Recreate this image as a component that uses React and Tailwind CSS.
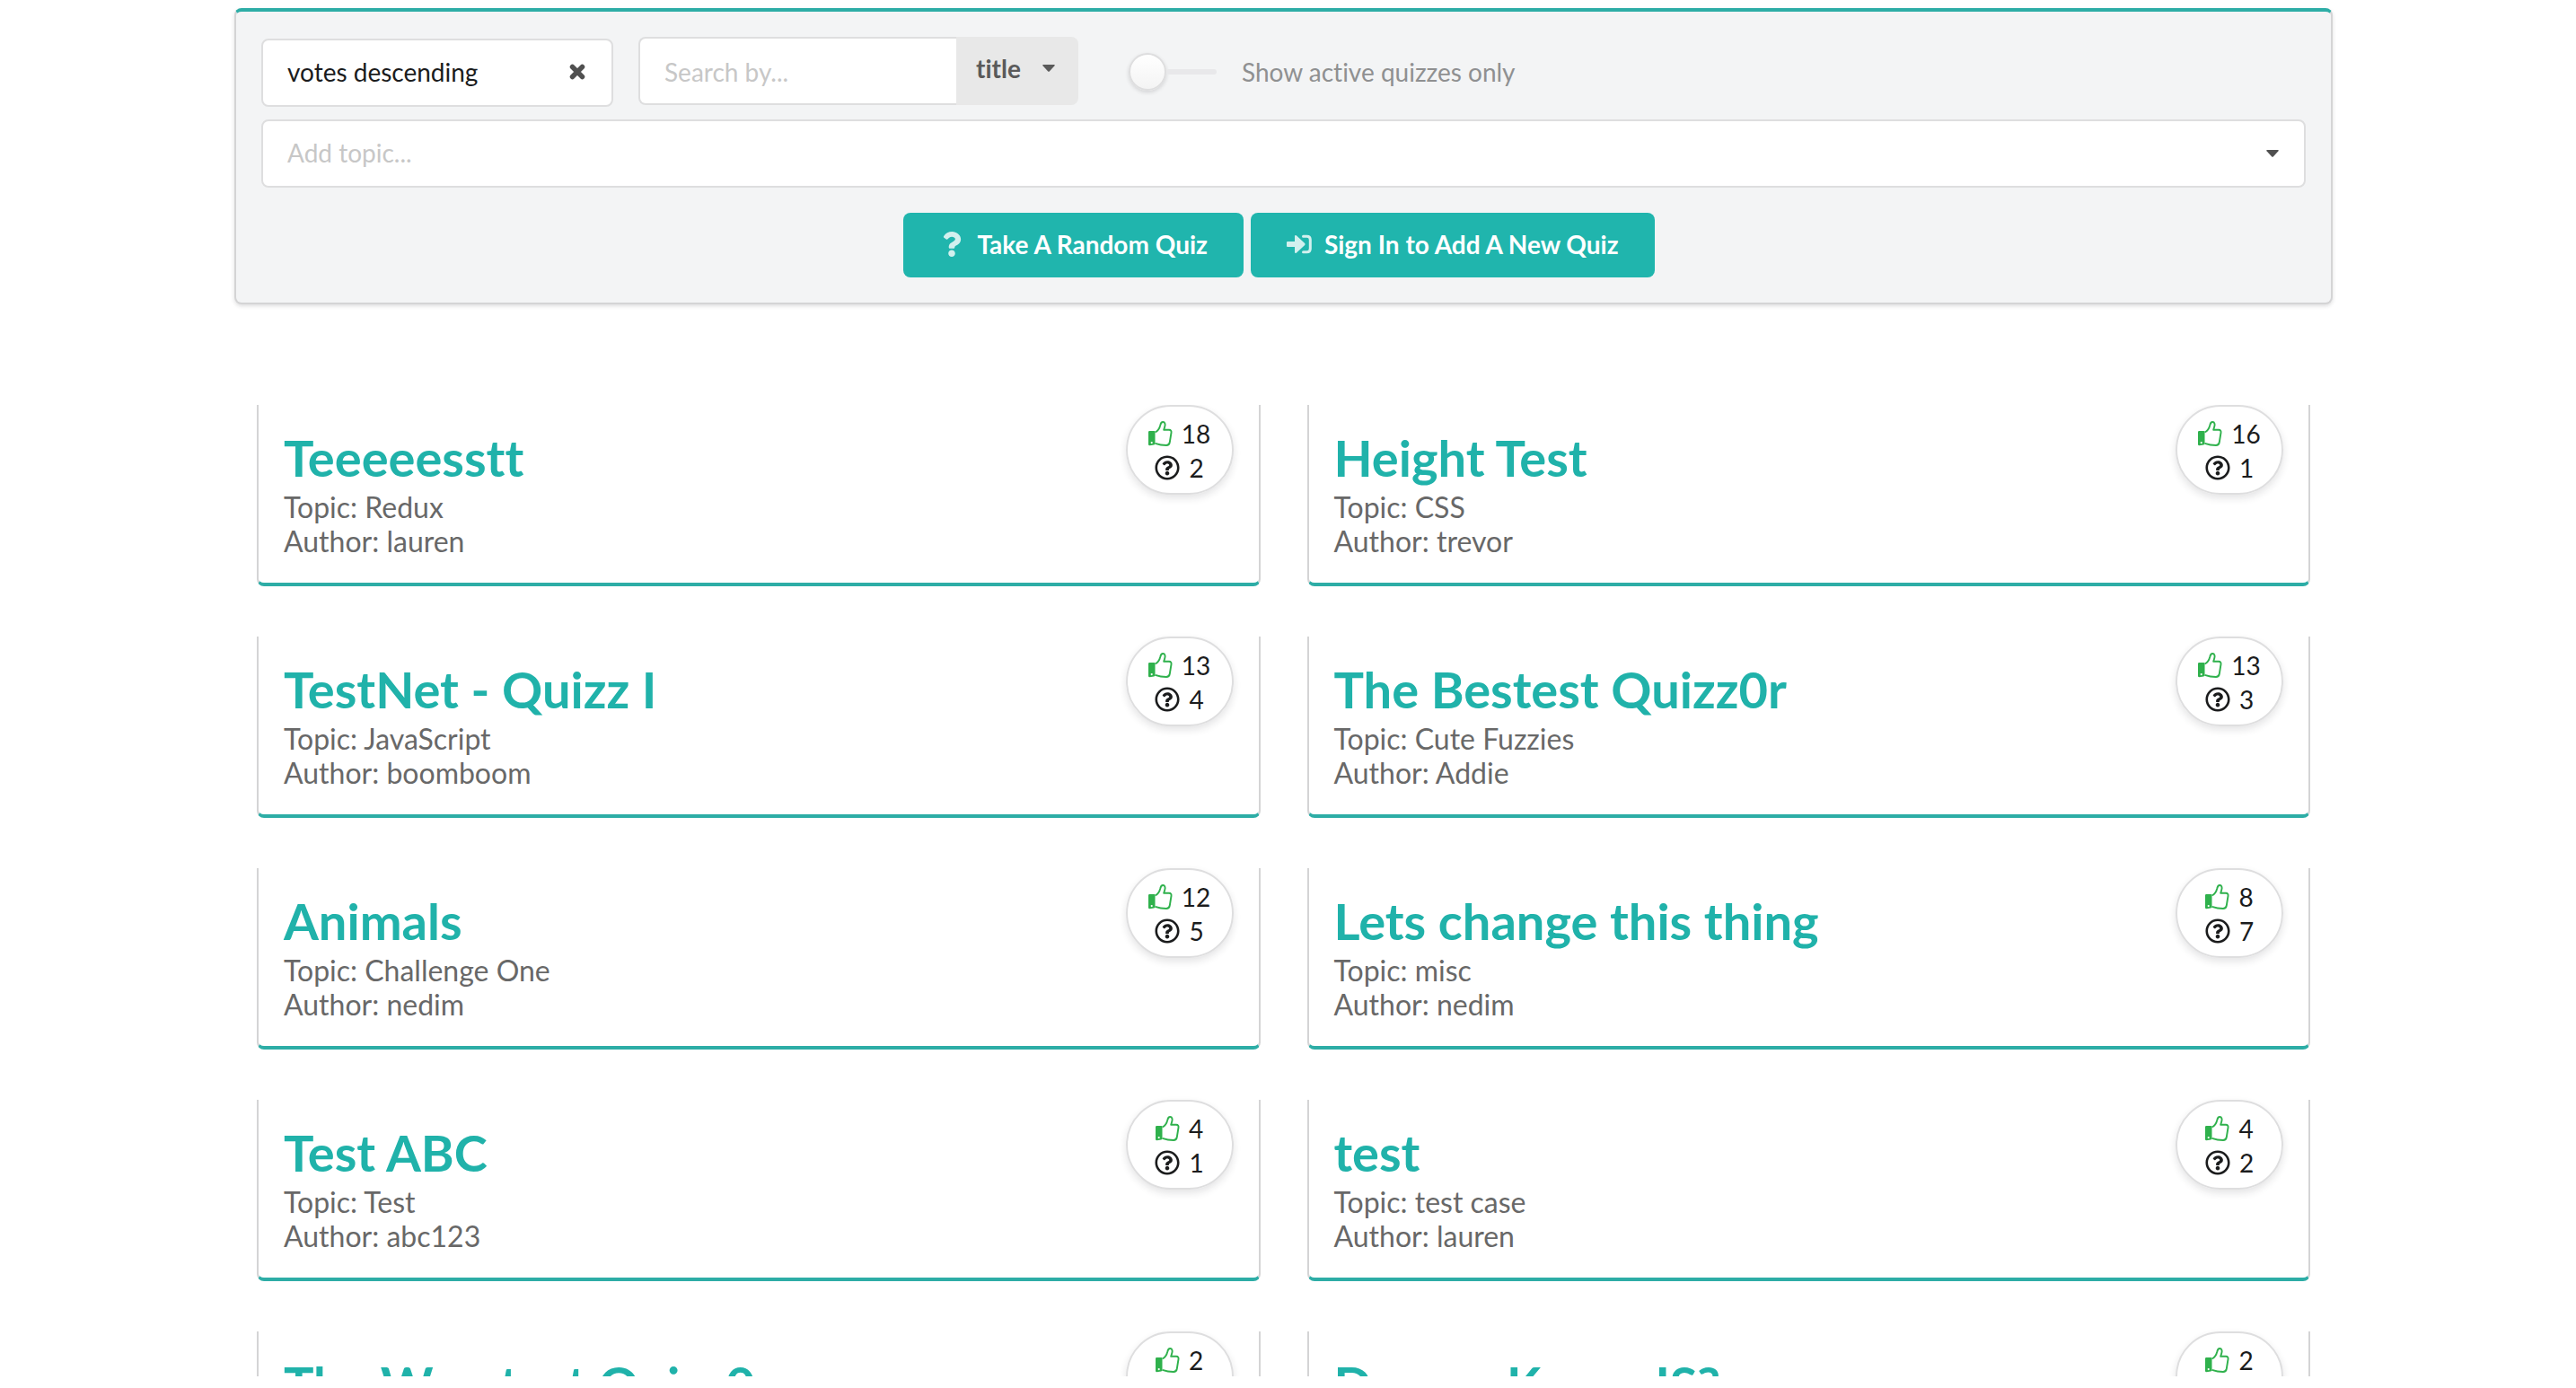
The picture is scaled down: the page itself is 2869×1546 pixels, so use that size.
import { useState } from "react";
import { FaRegQuestionCircle, FaQuestion } from "react-icons/fa";

const quizzes = [
  { title: "Teeeeesstt", topic: "Redux", author: "lauren", votes: 18, questions: 2 },
  { title: "Height Test", topic: "CSS", author: "trevor", votes: 16, questions: 1 },
  { title: "TestNet - Quizz I", topic: "JavaScript", author: "boomboom", votes: 13, questions: 4 },
  { title: "The Bestest Quizz0r", topic: "Cute Fuzzies", author: "Addie", votes: 13, questions: 3 },
  { title: "Animals", topic: "Challenge One", author: "nedim", votes: 12, questions: 5 },
  { title: "Lets change this thing", topic: "misc", author: "nedim", votes: 8, questions: 7 },
  { title: "Test ABC", topic: "Test", author: "abc123", votes: 4, questions: 1 },
  { title: "test", topic: "test case", author: "lauren", votes: 4, questions: 2 },
  { title: "The Worstest Quizz0r", topic: "Misc", author: "Addie", votes: 2, questions: 3 },
  { title: "Do you Know JS?", topic: "JavaScript", author: "nedim", votes: 2, questions: 3 },
];

function ThumbIcon() {
  return (
    <svg viewBox="0 0 27 28" className="h-7 w-[27px] shrink-0 text-[#2fb14c]" aria-hidden="true">
      <path
        d="M7.5 12.5 C10.5 11 12.5 8 13.3 4.5 C13.8 2 14.8 1 16.2 1 C18.6 1 19 3.8 18.3 6 L17.2 9.8 H23 C25.2 9.8 25.8 11.3 25.5 13 L23.8 23.5 C23.4 26 22.3 27 20 27 C15 27 11.5 26.2 7.5 24.8"
        fill="none"
        stroke="currentColor"
        strokeWidth="1.9"
        strokeLinejoin="round"
      />
      <path
        fillRule="evenodd"
        fill="currentColor"
        d="M1.3 11 H6.2 Q7.5 11 7.5 12.3 V25 Q7.5 26.3 6.2 26.5 L1.5 27.3 Q0 27.3 0 26 V12.3 Q0 11 1.3 11 Z M3.7 23 A1.1 1.1 0 1 0 3.7 25.2 A1.1 1.1 0 1 0 3.7 23 Z"
      />
    </svg>
  );
}

function CloseIcon() {
  return (
    <svg viewBox="0 0 20 20" className="size-5" aria-hidden="true">
      <path d="M4.5 4.5 L15.5 15.5 M15.5 4.5 L4.5 15.5" stroke="currentColor" strokeWidth="5.5" strokeLinecap="round" />
    </svg>
  );
}

function SignInIcon() {
  return (
    <svg viewBox="0 0 28 22" className="h-[22px] w-7 shrink-0" aria-hidden="true">
      <path d="M0 9 Q0 8 1 8 H9 V2 Q9.3 0.3 10.8 1.2 L20.2 10.1 Q21 11 20.2 11.9 L10.8 20.8 Q9.3 21.7 9 20 V14 H1 Q0 14 0 13 Z" fill="currentColor" />
      <path d="M18.5 2.2 H22.5 Q26.3 2.2 26.3 6 V16 Q26.3 19.8 22.5 19.8 H18.5" fill="none" stroke="currentColor" strokeWidth="3" strokeLinecap="round" />
    </svg>
  );
}

function Caret() {
  return (
    <svg viewBox="0 0 14 8" className="h-2 w-3.5 shrink-0" aria-hidden="true">
      <path d="M1 0 H13 Q14.5 0 13.5 1.2 L7.8 7.4 Q7 8.2 6.2 7.4 L0.5 1.2 Q-0.5 0 1 0 Z" fill="currentColor" />
    </svg>
  );
}

function QuizCard({ quiz }) {
  return (
    <article className="flex items-start justify-between rounded-b-lg border-x-2 border-b-4 border-x-[#d4d4d5] border-b-[#2dada6] px-7">
      <div className="pt-7 pb-[27px]">
        <h2 className="mb-[5px] text-[56px] leading-[62px] font-bold text-[#20b2aa]">
          <a href="#quiz">{quiz.title}</a>
        </h2>
        <p className="text-[32px] leading-[38px] text-[#686868]">Topic: {quiz.topic}</p>
        <p className="text-[32px] leading-[38px] text-[#686868]">Author: {quiz.author}</p>
      </div>
      <div className="flex w-[120px] flex-col items-center rounded-[50px] border-2 border-[#dededf] pt-[11px] pb-[9px] text-[28px] leading-[38px] text-[#1b1c1d] shadow-[0_4px_8px_0_rgba(34,36,38,0.12)]">
        <span className="flex items-center gap-2.5">
          <ThumbIcon />
          {quiz.votes}
        </span>
        <span className="flex items-center gap-2.5">
          <FaRegQuestionCircle className="size-7" aria-hidden="true" />
          {quiz.questions}
        </span>
      </div>
    </article>
  );
}

export default function App() {
  const [activeOnly, setActiveOnly] = useState(false);
  return (
    <div className="flex h-screen flex-col bg-white pt-[9px] pr-2.5 pb-[13px] font-['Lato',sans-serif] [font-variant-ligatures:none]">
      <main className="mx-auto flex min-h-0 w-full max-w-[2337px] flex-1 flex-col">
        <form
          onSubmit={(e) => e.preventDefault()}
          className="shrink-0 rounded-lg border-2 border-t-4 border-[#d4d4d5] border-t-[#2dada6] bg-[#f3f4f5] p-7 text-[28px] shadow-[0_2px_4px_0_rgba(34,36,38,0.15)]"
        >
          <div className="flex items-start">
            <div className="mt-0.5 mr-7 flex h-[76px] w-[392px] items-center justify-between rounded-lg border-2 border-[#dededf] bg-white pr-7 pb-0.5 pl-[27px]">
              <span className="text-[#1b1c1d]">votes descending</span>
              <button type="button" aria-label="Clear sorting" className="text-[#505050]">
                <CloseIcon />
              </button>
            </div>
            <div className="flex h-[76px] w-[490px]">
              <input
                type="text"
                aria-label="Search quizzes"
                placeholder="Search by..."
                className="min-w-0 flex-1 rounded-l-lg border-2 border-r-0 border-[#dededf] bg-white px-[27px] pt-0.5 outline-none placeholder:text-[#c7c7c7]"
              />
              <button type="button" className="flex w-[136px] items-center gap-6 rounded-r-lg bg-[#e8e8e8] pb-1.5 pl-[22px] font-bold text-[#5a5a5a]">
                title
                <Caret />
              </button>
            </div>
            <label className="ml-14 flex h-[76px] items-center pt-0.5">
              <input
                type="checkbox"
                checked={activeOnly}
                onChange={(e) => setActiveOnly(e.target.checked)}
                className="peer sr-only"
              />
              <span className="flex w-[98px] items-center peer-checked:flex-row-reverse">
                <span className="size-[42px] rounded-full border-2 border-[#dededf] bg-linear-to-b from-white to-[#f4f4f4] shadow-[0_2px_4px_0_rgba(34,36,38,0.15)]" />
                <span className="h-1.5 flex-1 rounded-full bg-[#e8e8ea]" />
              </span>
              <span className="ml-7 text-[#8f9091]">Show active quizzes only</span>
            </label>
          </div>
          <div className="mt-3.5 flex h-[76px] items-center justify-between rounded-lg border-2 border-[#dededf] bg-white pr-7 pl-[27px]">
            <input
              type="text"
              aria-label="Add topic"
              placeholder="Add topic..."
              className="flex-1 pb-0.5 outline-none placeholder:text-[#c7c7c7]"
            />
            <button type="button" aria-label="Show topics" className="text-[#505050]">
              <Caret />
            </button>
          </div>
          <div className="mt-7 flex justify-center gap-2 pr-2.5 font-bold text-white">
            <button type="button" className="flex h-[72px] items-center rounded-lg bg-[#20b5ad] px-10 pb-0.5">
              <FaQuestion className="mr-3.5 size-7 opacity-80" aria-hidden="true" />
              Take A Random Quiz
            </button>
            <button type="button" className="flex h-[72px] items-center gap-3.5 rounded-lg bg-[#20b5ad] px-10 pb-0.5">
              <span className="opacity-80">
                <SignInIcon />
              </span>
              Sign In to Add A New Quiz
            </button>
          </div>
        </form>
        <section
          aria-label="Quizzes"
          className="mt-28 grid min-h-0 flex-1 auto-rows-max grid-cols-2 gap-x-[52px] gap-y-14 overflow-hidden px-[25px]"
        >
          {quizzes.map((quiz) => (
            <QuizCard key={quiz.title} quiz={quiz} />
          ))}
        </section>
      </main>
    </div>
  );
}
